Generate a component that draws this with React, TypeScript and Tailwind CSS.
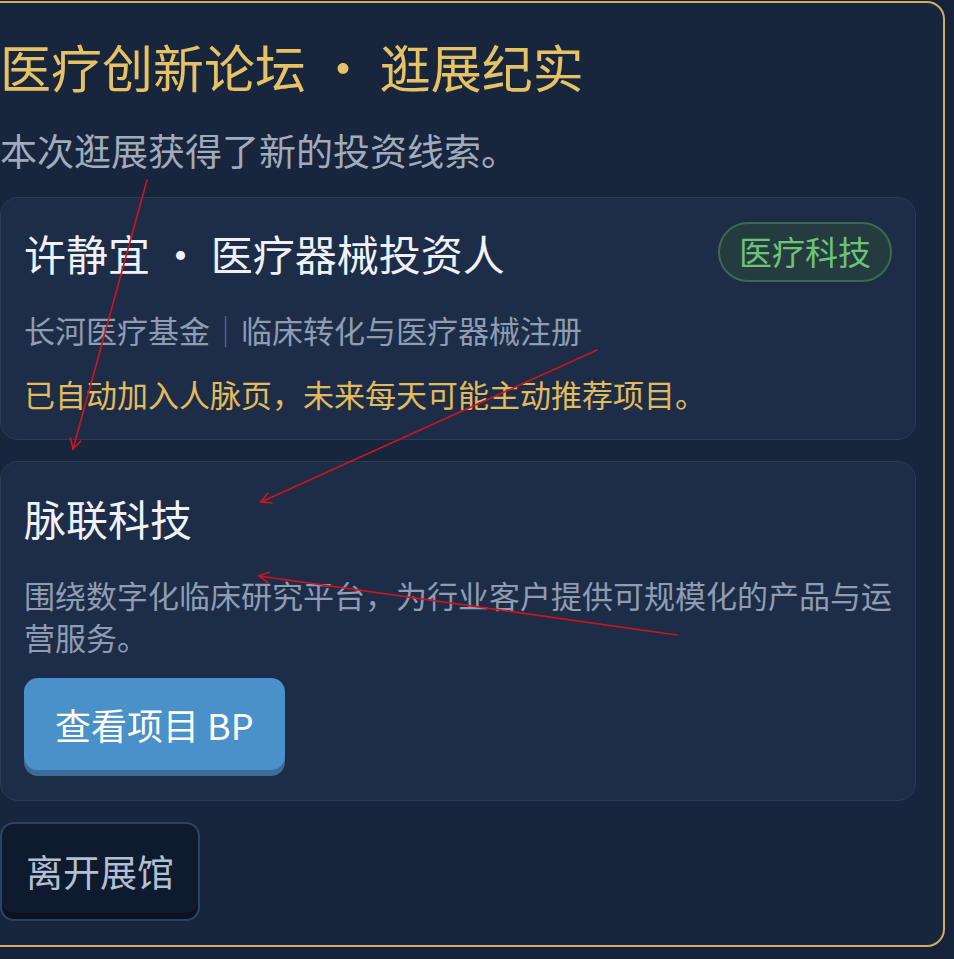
import React from "react";

const font = { fontFamily: '"Noto Sans CJK SC", "Noto Sans", sans-serif' };

function Arrows() {
  const arrows = [
    { x1: 147, y1: 180, x2: 73, y2: 449 },
    { x1: 597, y1: 350, x2: 261, y2: 502 },
    { x1: 677, y1: 635, x2: 259, y2: 576 },
  ];
  return (
    <svg
      className="absolute left-0 top-0 pointer-events-none"
      width="954"
      height="959"
      viewBox="0 0 954 959"
    >
      {arrows.map((a, i) => {
        const ang = Math.atan2(a.y2 - a.y1, a.x2 - a.x1);
        const len = 11;
        const spread = 0.5;
        const h1x = a.x2 - len * Math.cos(ang - spread);
        const h1y = a.y2 - len * Math.sin(ang - spread);
        const h2x = a.x2 - len * Math.cos(ang + spread);
        const h2y = a.y2 - len * Math.sin(ang + spread);
        return (
          <g key={i} stroke="#d0141f" strokeWidth="1.6" fill="none" strokeLinecap="round">
            <line x1={a.x1} y1={a.y1} x2={a.x2} y2={a.y2} />
            <polyline points={`${h1x},${h1y} ${a.x2},${a.y2} ${h2x},${h2y}`} />
          </g>
        );
      })}
    </svg>
  );
}

export default function App() {
  return (
    <div className="relative w-[954px] h-[959px] overflow-hidden bg-[#15223a]" style={font}>
      <div className="mt-[1px] -ml-[30px] w-[975px] rounded-[18px] border-2 border-[#cfae62] bg-[#17253d] pl-[28px] pr-[27px] pt-[27px] pb-[24px] flex flex-col">
        <h1 className="text-[51px] leading-[72px] text-[#e6c264] font-normal whitespace-nowrap">
          医疗创新论坛 · 逛展纪实
        </h1>
        <p className="mt-[22px] text-[37px] leading-[52px] text-[#a1abbc] whitespace-nowrap">
          本次逛展获得了新的投资线索。
        </p>

        <div className="mt-[21px] rounded-[18px] border border-[#2b3c58] bg-[#1d2d48] pl-[23px] pr-[23px] pt-[24px] pb-[23px]">
          <div className="flex items-center justify-between h-[60px]">
            <div className="text-[42px] leading-[60px] text-[#eef2f8] whitespace-nowrap pt-[2px]">
              许静宜 · 医疗器械投资人
            </div>
            <div className="h-[60px] rounded-full border-2 border-[#3d6a4f] bg-[#243c40] px-[19px] flex items-center text-[33px] text-[#6cc474] whitespace-nowrap">
              医疗科技
            </div>
          </div>
          <div className="mt-[25px] text-[31px] leading-[45px] text-[#8f9cb2] whitespace-nowrap">
            长河医疗基金<span className="text-[#56657e]">｜</span>临床转化与医疗器械注册
          </div>
          <div className="mt-[19px] text-[31px] leading-[45px] text-[#e2bb5c] whitespace-nowrap">
            已自动加入人脉页，未来每天可能主动推荐项目。
          </div>
        </div>

        <div className="mt-[21px] rounded-[18px] border border-[#2b3c58] bg-[#1d2d48] pl-[23px] pr-[16px] pt-[26px] pb-[30px]">
          <div className="text-[42px] leading-[60px] text-[#eef2f8]">脉联科技</div>
          <p className="mt-[26px] text-[31px] leading-[42px] text-[#8f9cb2]">
            围绕数字化临床研究平台，为行业客户提供可规模化的产品与运营服务。
          </p>
          <button
            className="mt-[20px] h-[92px] rounded-[14px] bg-[#4a90c9] px-[31px] text-[36px] text-white shadow-[0_6px_0_#3a6c9c] whitespace-nowrap"
            style={font}
          >
            查看项目 BP
          </button>
        </div>

        <div className="mt-[21px]">
          <button
            className="h-[99px] rounded-[14px] border-2 border-[#2d4260] bg-[#0e1a2d] px-[24px] text-[37px] text-[#b3bfd2] shadow-[inset_0_-6px_0_#0a1322] whitespace-nowrap"
            style={font}
          >
            离开展馆
          </button>
        </div>
      </div>
      <Arrows />
    </div>
  );
}
